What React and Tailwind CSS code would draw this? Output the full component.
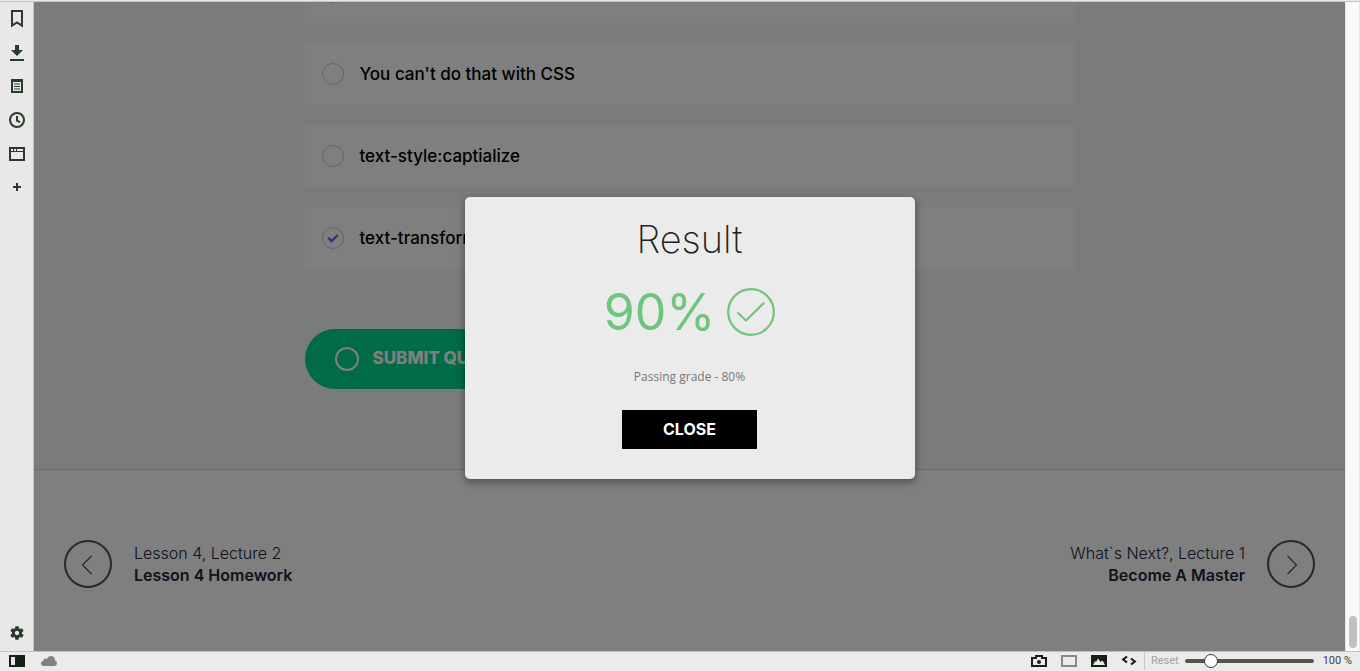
import React from "react";

const sideTools = [
  {
    name: "Bookmarks",
    icon: <path d="M12 9h10v14.6l-5-3.2-5 3.2z" fill="none" stroke="currentColor" strokeWidth="2" />,
  },
  {
    name: "Downloads",
    icon: <path d="M15 9h4v5h4l-6 6-6-6h4zM10 23h14v2H10z" fill="currentColor" />,
  },
  {
    name: "Notes",
    icon: (
      <path
        d="M11 9h12v14H11zM13 12v9h8v-9zM14 13.5h6v1h-6zM14 16h6v1h-6zM14 18.5h6v1h-6z"
        fill="currentColor"
        fillRule="evenodd"
      />
    ),
  },
  {
    name: "History",
    icon: (
      <g fill="none" stroke="currentColor" strokeWidth="2">
        <circle cx="17" cy="16" r="7" />
        <path d="M17 12v4.6l3 1.6" />
      </g>
    ),
  },
  {
    name: "Window",
    icon: (
      <path
        d="M9 9h16v14H9zM11 14v7h12v-7zM11 11v2h2v-2zM14 11v2h2v-2zM17 11v2h6v-2z"
        fill="currentColor"
        fillRule="evenodd"
      />
    ),
  },
  {
    name: "Add panel",
    icon: <path d="M16 11h2v3h3v2h-3v3h-2v-3h-3v-2h3z" fill="currentColor" />,
  },
];

const options = [
  { id: "a" },
  { id: "b", label: "You can't do that with CSS" },
  { id: "c", label: "text-style:captialize" },
  { id: "d", label: "text-transform:capitalize", checked: true },
];

function SideButton({ name, children }) {
  return (
    <button type="button" aria-label={name} className="block size-[34px]">
      <svg viewBox="0 0 34 34" className="size-[34px]">
        {children}
      </svg>
    </button>
  );
}

function Sidebar() {
  return (
    <nav className="flex w-[34px] shrink-0 flex-col border-r border-[#bfc3bc] bg-[#e8e8e8] text-[#2c3a2c]">
      {sideTools.map((t) => (
        <SideButton key={t.name} name={t.name}>
          {t.icon}
        </SideButton>
      ))}
      <div className="mt-auto">
        <SideButton name="Settings">
          <g transform="translate(8.6 7.6) scale(0.7)" fill="currentColor">
            <path d="M19.14 12.94c.04-.3.06-.61.06-.94 0-.32-.02-.64-.07-.94l2.03-1.58a.49.49 0 0 0 .12-.61l-1.92-3.32a.488.488 0 0 0-.59-.22l-2.39.96c-.5-.38-1.03-.7-1.62-.94l-.36-2.54a.484.484 0 0 0-.48-.41h-3.84c-.24 0-.43.17-.47.41l-.36 2.54c-.59.24-1.13.57-1.62.94l-2.39-.96c-.22-.08-.47 0-.59.22L2.74 8.87c-.12.21-.08.47.12.61l2.03 1.58c-.05.3-.09.63-.09.94s.02.64.07.94l-2.03 1.58a.49.49 0 0 0-.12.61l1.92 3.32c.12.22.37.29.59.22l2.39-.96c.5.38 1.03.7 1.62.94l.36 2.54c.05.24.24.41.48.41h3.84c.24 0 .44-.17.47-.41l.36-2.54c.59-.24 1.13-.56 1.62-.94l2.39.96c.22.08.47 0 .59-.22l1.92-3.32c.12-.22.07-.47-.12-.61zM12 15.1c-1.7 0-3.1-1.4-3.1-3.1s1.4-3.1 3.1-3.1 3.1 1.4 3.1 3.1-1.4 3.1-3.1 3.1" />
          </g>
        </SideButton>
      </div>
    </nav>
  );
}

function Option({ id, label, checked }) {
  return (
    <label className="flex h-[62px] shrink-0 items-center gap-4 bg-white px-[17px] text-[17px] leading-6 font-medium text-black">
      <span className="grid size-[22px] shrink-0 place-items-center">
        <input
          type="radio"
          name="answer"
          value={id}
          aria-label={label ? undefined : "Answer"}
          defaultChecked={checked}
          className="peer col-start-1 row-start-1 size-[22px] appearance-none rounded-full border border-[#c6c6c6]"
        />
        <svg viewBox="0 0 12 10" className="col-start-1 row-start-1 hidden h-[10px] w-3 peer-checked:block">
          <path d="M1.2 4.6l3.4 3.4 6.2-6" fill="none" stroke="#4a6fff" strokeWidth="2.4" />
        </svg>
      </span>
      {label}
    </label>
  );
}

function Lesson({ course, title, next }) {
  return (
    <a
      href="#lesson"
      className={
        next
          ? "flex flex-row-reverse items-center gap-[22px] text-right text-[#20263c]"
          : "flex items-center gap-[22px] text-[#20263c]"
      }
    >
      <svg viewBox="0 0 48 48" className="size-12 shrink-0" fill="none" stroke="#4a5166">
        <circle cx="24" cy="24" r="23" strokeWidth="2" />
        {next ? <path d="M20.5 16l9 9-9 9" strokeWidth="1.3" /> : <path d="M27.5 16l-9 9 9 9" strokeWidth="1.3" />}
      </svg>
      <span className="text-base leading-[22px]">
        <span className="block font-light">{course}</span>
        <span className="block font-semibold">{title}</span>
      </span>
    </a>
  );
}

function ResultDialog() {
  return (
    <div className="absolute inset-0 flex items-center justify-center bg-black/50 pt-[22px]">
      <section
        role="dialog"
        aria-labelledby="result-title"
        className="flex w-[450px] flex-col items-center rounded-[5px] bg-[#ebebeb] pt-[22px] pb-[30px] shadow-[0_3px_8px_rgba(0,0,0,0.4)]"
      >
        <h2 id="result-title" className="text-[38px] leading-10 font-extralight text-[#222]">
          Result
        </h2>
        <div className="mt-[29px] flex h-12 items-center gap-3 text-[#70c57c]">
          <span className="text-[50px] leading-[50px] font-normal">90%</span>
          <svg viewBox="0 0 48 48" className="size-12" fill="none" stroke="currentColor" strokeWidth="2.2">
            <circle cx="24" cy="24" r="22.8" />
            <path d="M10.5 24.5l8.500 8L37.2 14.600" strokeLinejoin="round" />
          </svg>
        </div>
        <p className="mt-8 font-['Open_Sans',sans-serif] text-xs leading-[18px] text-[#777]">Passing grade - 80%</p>
        <button type="button" className="mt-6 h-[39px] w-[135px] bg-black text-base font-bold text-white">
          CLOSE
        </button>
      </section>
    </div>
  );
}

function StatusBar() {
  return (
    <footer className="flex h-5 shrink-0 items-center border-t border-[#bfc3bc] bg-[#ebebeb] pb-px pl-[9px] pr-2 font-[Roboto,sans-serif] text-[11px] text-[#172017]">
      <button type="button" aria-label="Toggle panel">
        <svg viewBox="0 0 16 12" className="block h-3 w-4">
          <path d="M0 0h16v12H0zM2 2v8h4V2z" fill="currentColor" fillRule="evenodd" />
        </svg>
      </button>
      <button type="button" aria-label="Sync" className="ml-4 text-[#7e847e]">
        <svg viewBox="0 0 16 10" className="block h-[10px] w-4">
          <path
            d="M3 10C1.2 10 0 8.9 0 7.4 0 6 1 5.2 2.2 5.1 2.300 3.600 3.400 2.600 4.800 2.600c.5 0 .9.1 1.300.3C6.800 1.200 8.200 0 10.100 0c2.300 0 3.900 1.700 3.900 3.900v.5c1.200.3 2 1.300 2 2.600C16 8.800 14.800 10 13 10z"
            fill="currentColor"
          />
        </svg>
      </button>
      <div className="ml-auto flex items-center gap-[14px]">
        <button type="button" aria-label="Capture page">
          <svg viewBox="0 0 16 12" className="block h-3 w-4">
            <path d="M4 2V0h8v2h4v10H0V2zM2 4v6h12V4h-4V2H6v2z" fill="currentColor" fillRule="evenodd" />
            <circle cx="8" cy="7" r="2" fill="currentColor" />
          </svg>
        </button>
        <button type="button" aria-label="Tiling" className="text-[#858a85]">
          <svg viewBox="0 0 16 12" className="block h-3 w-4">
            <path d="M1 1h14v10H1z" fill="none" stroke="currentColor" strokeWidth="2" />
          </svg>
        </button>
        <button type="button" aria-label="Images">
          <svg viewBox="0 0 16 12" className="block h-3 w-4">
            <path d="M0 0h16v12H0zM2 10h12l-1.5-3L11 5.5 9.5 7 7 3.5 5 7 4 6z" fill="currentColor" fillRule="evenodd" />
          </svg>
        </button>
        <button type="button" aria-label="Page actions">
          <svg viewBox="0 0 16 12" className="block h-3 w-4">
            <path d="M6 1.5L2.2 4.5 6 7.5M10 3.5l3.8 3L10 9.5" fill="none" stroke="currentColor" strokeWidth="2.2" />
          </svg>
        </button>
      </div>
      <div className="ml-[7px] flex items-center border-l border-[#c4c8c2] pl-[6px] leading-[18px]">
        <button type="button" className="text-[#a0a3a0]">
          Reset
        </button>
        <input
          type="range"
          aria-label="Zoom"
          min="20"
          max="500"
          defaultValue="100"
          className="ml-[6px] h-[14px] w-[129px] appearance-none bg-transparent [&::-webkit-slider-runnable-track]:h-1 [&::-webkit-slider-runnable-track]:rounded-full [&::-webkit-slider-runnable-track]:bg-[#4f5a4b] [&::-webkit-slider-thumb]:-mt-[5px] [&::-webkit-slider-thumb]:size-[14px] [&::-webkit-slider-thumb]:appearance-none [&::-webkit-slider-thumb]:rounded-full [&::-webkit-slider-thumb]:border [&::-webkit-slider-thumb]:border-[#2c3a2c] [&::-webkit-slider-thumb]:bg-white"
        />
        <output className="ml-[9px] text-[#3d443d]">100 %</output>
      </div>
    </footer>
  );
}

export default function App() {
  return (
    <div className="flex h-screen flex-col overflow-hidden font-[Inter,sans-serif]">
      <div className="h-[2px] shrink-0 border-b border-[#c6c8c5] bg-[#e8e8e8]" />
      <div className="flex min-h-0 flex-1">
        <Sidebar />
        <main className="relative flex min-w-0 flex-1 flex-col justify-end overflow-hidden bg-[#f5f7fa]">
          <form className="shrink-0 border-b border-[#d2d6dc] pb-20">
            <div className="mx-auto flex max-w-[770px] flex-col gap-5">
              {options.map((o) => (
                <Option key={o.id} {...o} />
              ))}
              <button
                type="button"
                className="mt-10 flex h-[60px] items-center gap-[14px] self-start rounded-full bg-[#00d68a] px-[30px] text-[17px] font-extrabold text-white"
              >
                <span className="size-6 rounded-full border-2 border-white" />
                SUBMIT QUIZ
              </button>
            </div>
          </form>
          <div className="flex shrink-0 items-start justify-between bg-white px-[30px] pt-[70px] pb-[63px]">
            <Lesson course="Lesson 4, Lecture 2" title="Lesson 4 Homework" />
            <Lesson course="What`s Next?, Lecture 1" title="Become A Master" next />
          </div>
          <ResultDialog />
        </main>
        <div className="flex w-[15px] shrink-0 flex-col justify-end border-x border-[#e6e6e6] bg-[#fafafa] px-[3px] pb-[3px]">
          <div className="h-8 w-2 rounded-full bg-[#c1c1c1]" />
        </div>
      </div>
      <StatusBar />
    </div>
  );
}
